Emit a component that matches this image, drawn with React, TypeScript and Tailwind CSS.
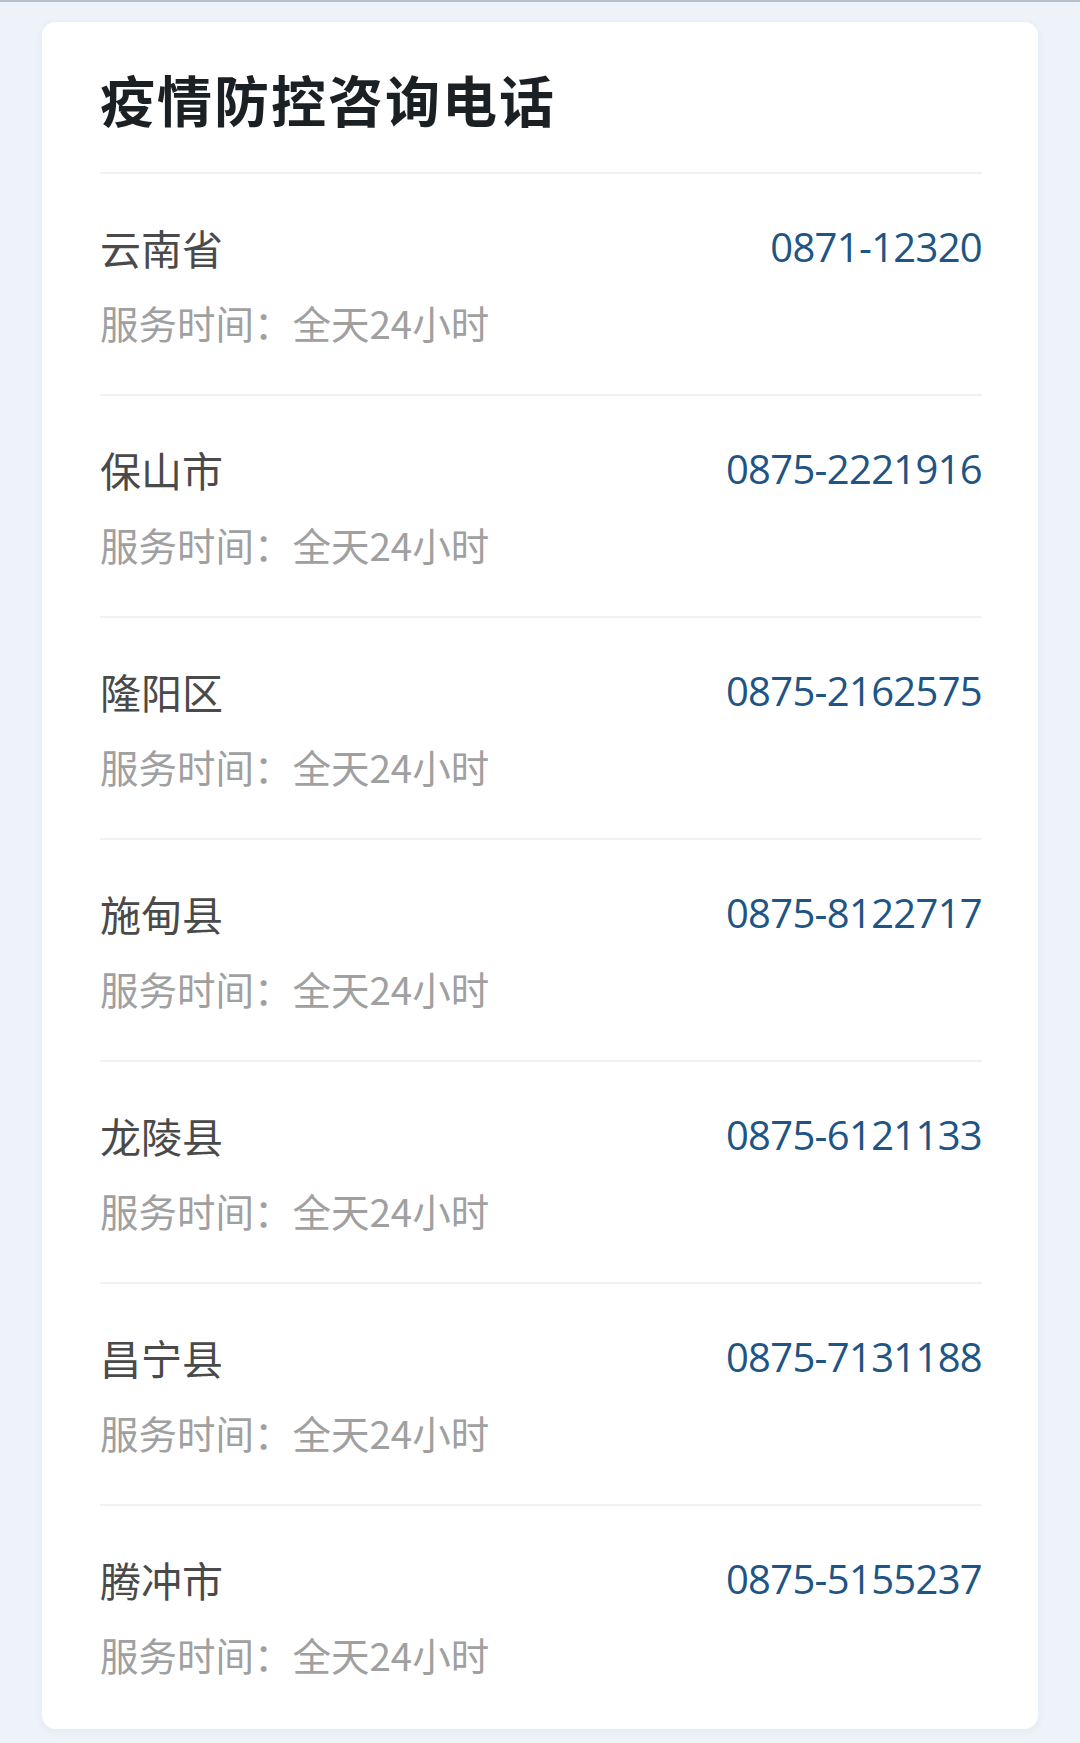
const hotlines = [
  { name: "云南省", phone: "0871-12320" },
  { name: "保山市", phone: "0875-2221916" },
  { name: "隆阳区", phone: "0875-2162575" },
  { name: "施甸县", phone: "0875-8122717" },
  { name: "龙陵县", phone: "0875-6121133" },
  { name: "昌宁县", phone: "0875-7131188" },
  { name: "腾冲市", phone: "0875-5155237" },
];

const cjk = "font-['Noto_Sans_CJK_SC','Noto_Sans',sans-serif]";

export default function App() {
  return (
    <div className="min-h-[1743px] w-[1080px] border-t-2 border-[#b8c2cc] bg-[#eef3f9] px-[42px] pt-[20px]">
      <div className={`rounded-[14px] bg-white pr-[56px] pl-[58px] pt-[40px] pb-[47px] shadow-[0_2px_10px_rgba(40,70,110,0.06)] ${cjk}`}>
        <h1 className="pb-[38px] text-[55px] leading-[72px] font-bold tracking-[2px] text-[#1b2025]">
          疫情防控咨询电话
        </h1>
        {hotlines.map((item, i) => (
          <div
            key={item.name}
            className={`border-t-2 border-[#f1f2f3] pt-[45px] ${i === hotlines.length - 1 ? "" : "pb-[44px]"}`}
          >
            <div className="flex items-center justify-between">
              <span className="text-[41px] leading-[56px] text-[#4a4a4a]">{item.name}</span>
              <span className="font-['Open_Sans','Noto_Sans',sans-serif] text-[40px] leading-[56px] tracking-[-0.7px] text-[#1e5584]">
                {item.phone}
              </span>
            </div>
            <div className="mt-[19px] text-[38.5px] leading-[56px] text-[#a0a0a0]">
              服务时间：全天24小时
            </div>
          </div>
        ))}
      </div>
    </div>
  );
}
